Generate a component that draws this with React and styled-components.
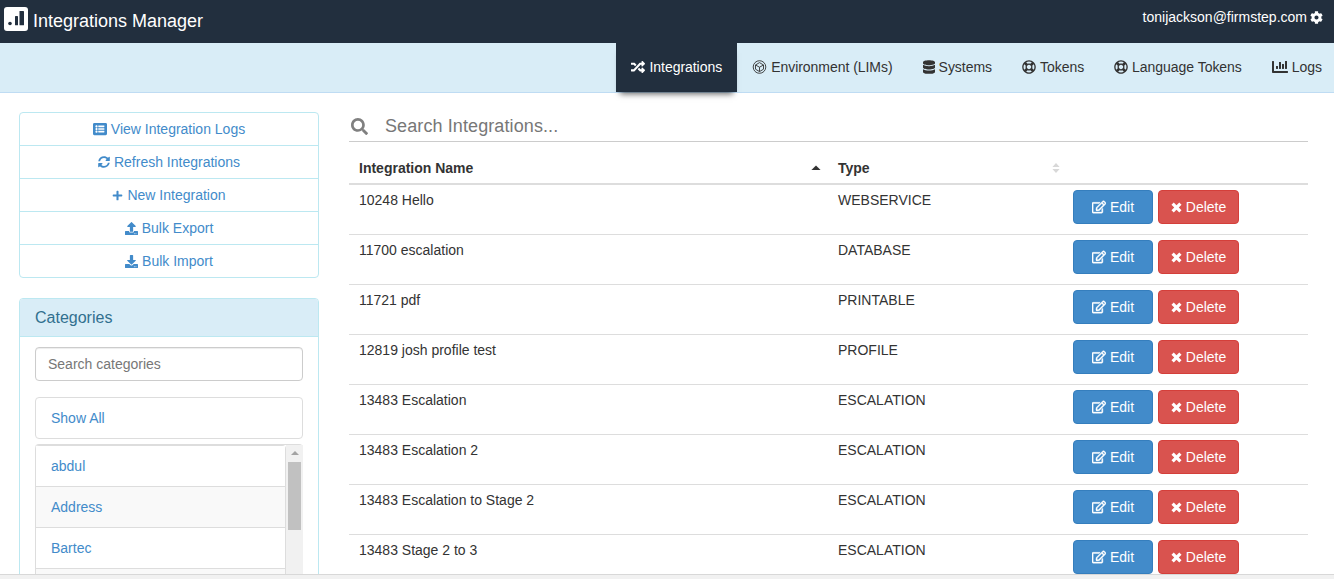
import React from "react";
import styled, { createGlobalStyle } from "styled-components";
import {
  FaCog,
  FaRandom,
  FaDatabase,
  FaRegLifeRing,
  FaChartBar,
  FaListAlt,
  FaSyncAlt,
  FaPlus,
  FaUpload,
  FaDownload,
  FaSearch,
  FaRegEdit,
} from "react-icons/fa";

const GlobalStyle = createGlobalStyle`
  html, body {
    margin: 0;
    height: 100%;
    overflow: hidden;
    background: #fff;
  }
  body {
    font-family: "Liberation Sans", Arial, sans-serif;
    font-size: 14px;
    line-height: 20px;
    color: #333;
  }
  * { box-sizing: border-box; }
`;

const TopBar = styled.header`
  height: 43px;
  background: #222f3e;
  color: #fff;
  display: flex;
  justify-content: space-between;
  padding: 0 11px 0 4px;
`;

const Brand = styled.div`
  display: flex;
  align-items: flex-start;
  gap: 5px;
  padding-top: 7px;
  font-size: 18px;
  line-height: 28px;
`;

const User = styled.div`
  display: flex;
  align-items: center;
  gap: 3px;
  height: 34px;
  svg { font-size: 13px; }
`;

const SubNav = styled.nav`
  height: 50px;
  background: #d9edf7;
  border-bottom: 1px solid #bfdcf3;
  display: flex;
  justify-content: flex-end;
  margin-right: -3px;
`;

const Tab = styled.a`
  display: flex;
  align-items: center;
  gap: 4px;
  height: 49px;
  padding: 0 15px 2px;
  letter-spacing: -0.04px;
  color: ${(p) => (p.$active ? "#fff" : "#333")};
  background: ${(p) => (p.$active ? "#222f3e" : "transparent")};
  box-shadow: ${(p) => (p.$active ? "0 6px 6px -4px rgba(0,0,0,.6)" : "none")};
`;

const DatabaseIcon = styled(FaDatabase)`
  width: 12px;
  height: 14px;
`;

const EditIcon = styled(FaRegEdit)`
  stroke: currentColor;
  stroke-width: 16px;
`;

const Page = styled.main`
  display: grid;
  grid-template-columns: 300px 959px;
  column-gap: 30px;
  padding: 18px 0 0 19px;
  align-items: start;
`;

const Sidebar = styled.aside`
  display: flex;
  flex-direction: column;
  gap: 20px;
  padding-top: 1px;
`;

const ActionList = styled.div`
  border: 1px solid #bce8f1;
  border-radius: 4px;
`;

const ActionLink = styled.a`
  display: flex;
  justify-content: center;
  align-items: center;
  gap: 4px;
  height: 33px;
  color: #428bca;
  &:first-child { height: 32px; }
  & + & { border-top: 1px solid #bce8f1; }
`;

const Panel = styled.section`
  border: 1px solid #bce8f1;
  border-radius: 4px;
`;

const PanelHeading = styled.h3`
  margin: 0;
  height: 38px;
  padding: 0 15px;
  background: #d9edf7;
  border-bottom: 1px solid #bce8f1;
  border-radius: 3px 3px 0 0;
  color: #31708f;
  font-size: 16px;
  font-weight: 400;
  line-height: 37px;
`;

const PanelBody = styled.div`
  padding: 10px 15px 15px;
`;

const CategorySearch = styled.input`
  display: block;
  width: 100%;
  height: 34px;
  padding: 6px 12px;
  border: 1px solid #ccc;
  border-radius: 4px;
  box-shadow: inset 0 1px 1px rgba(0, 0, 0, 0.075);
  font: inherit;
  color: #555;
  outline: none;
  &::placeholder { color: #777; opacity: 1; }
`;

const CategoryItem = styled.a`
  display: block;
  height: 41px;
  padding: 0 15px;
  line-height: 41px;
  color: #428bca;
  background: ${(p) => (p.$striped ? "#f9f9f9" : "#fff")};
  border-bottom: 1px solid #ddd;
`;

const ShowAll = styled(CategoryItem)`
  height: 42px;
  margin: 16px 0 5px;
  border: 1px solid #ddd;
  border-radius: 4px;
`;

const ScrollBox = styled.div`
  display: flex;
  height: 200px;
  border-top: 1px solid #ddd;
  border-radius: 4px 4px 0 0;
`;

const CategoryList = styled.div`
  flex: 1;
  border: 1px solid #ddd;
  border-bottom: 0;
  border-radius: 4px 4px 0 0;
`;

const ScrollTrack = styled.div`
  flex: 0 0 17px;
  background: #f1f1f1;
  display: flex;
  flex-direction: column;
  align-items: center;
  padding-top: 6px;
`;

const ScrollArrow = styled.div`
  width: 0;
  height: 0;
  border-left: 4px solid transparent;
  border-right: 4px solid transparent;
  border-bottom: 4px solid #a3a3a3;
`;

const ScrollThumb = styled.div`
  width: 13px;
  height: 68px;
  margin-top: 7px;
  background: #c1c1c1;
`;

const SearchRow = styled.div`
  display: flex;
  align-items: center;
  gap: 17px;
  height: 30px;
  padding-left: 2px;
  border-bottom: 1px solid #ccc;
  box-sizing: content-box;
  color: #777;
  font-size: 18px;
  letter-spacing: 0.1px;
  svg { font-size: 17px; color: #808080; }
`;

const Row = styled.div`
  display: grid;
  grid-template-columns: 479px 235px 1fr;
  height: 50px;
  border-bottom: 1px solid #ddd;
`;

const HeadRow = styled(Row)`
  height: 43px;
  border-bottom: 2px solid #ddd;
  font-weight: 700;
  padding-top: 10px;
`;

const HeadCell = styled.div`
  display: flex;
  justify-content: space-between;
  align-items: center;
  padding: 0 ${(p) => p.$right}px 0 10px;
  color: #333;
`;

const Cell = styled.div`
  padding: 5px 10px 0;
  color: #333;
`;

const Actions = styled.div`
  display: flex;
  gap: 5px;
  padding: 5px 0 0 10px;
`;

const Button = styled.button`
  display: flex;
  align-items: center;
  justify-content: center;
  gap: 4px;
  width: ${(p) => (p.$danger ? 81 : 80)}px;
  height: 34px;
  padding: 0;
  font: inherit;
  color: #fff;
  background: ${(p) => (p.$danger ? "#d9534f" : "#428bca")};
  border: 1px solid ${(p) => (p.$danger ? "#d43f3a" : "#357ebd")};
  border-radius: 4px;
`;

const BottomBar = styled.div`
  position: fixed;
  left: 0;
  right: 0;
  bottom: 0;
  height: 5px;
  background: #f1f1f1;
  border-top: 1px solid #d8d8d8;
`;

const Logo = () => (
  <svg width="24" height="24" viewBox="0 0 24 24">
    <rect width="24" height="24" rx="3" fill="#fff" />
    <circle cx="6" cy="16.5" r="1.8" fill="#222f3e" />
    <rect x="11" y="9" width="3" height="9.3" rx="0.6" fill="#222f3e" />
    <rect x="15.5" y="4" width="4.5" height="14.3" rx="0.6" fill="#222f3e" />
  </svg>
);

const EnvironmentIcon = () => (
  <svg width="15" height="14" viewBox="0 0 15 14" fill="none" stroke="currentColor" strokeWidth="0.9">
    <circle cx="7.5" cy="7" r="6.3" />
    <path d="M7.5 2.6 11.5 5v4.2l-4 2.4-4-2.4V5zM3.5 5l4 2.2L11.5 5M7.5 7.2v4.4" />
  </svg>
);

const DeleteIcon = () => (
  <svg width="11" height="11" viewBox="0 0 11 11" fill="none" stroke="currentColor" strokeWidth="3.2">
    <path d="M1.6 1.6 9.4 9.4M9.4 1.6 1.6 9.4" />
  </svg>
);

const SortedCaret = () => (
  <svg width="10" height="10" viewBox="0 0 10 10" fill="#333">
    <path d="M5 2.5 9.6 7H.4z" />
  </svg>
);

const UnsortedCaret = () => (
  <svg width="8" height="12" viewBox="0 0 8 12" fill="#d8d8d8">
    <path d="M4 1 7.6 5H.4zM4 11 .4 7h7.2z" />
  </svg>
);

const tabs = [
  { label: "Integrations", icon: <FaRandom size={14} />, active: true },
  { label: "Environment (LIMs)", icon: <EnvironmentIcon /> },
  { label: "Systems", icon: <DatabaseIcon /> },
  { label: "Tokens", icon: <FaRegLifeRing size={14} /> },
  { label: "Language Tokens", icon: <FaRegLifeRing size={14} /> },
  { label: "Logs", icon: <FaChartBar size={16} /> },
];

const actions = [
  { label: "View Integration Logs", icon: <FaListAlt size={14} /> },
  { label: "Refresh Integrations", icon: <FaSyncAlt size={12} /> },
  { label: "New Integration", icon: <FaPlus size={11} /> },
  { label: "Bulk Export", icon: <FaUpload size={13} /> },
  { label: "Bulk Import", icon: <FaDownload size={13} /> },
];

const integrations = [
  ["10248 Hello", "WEBSERVICE"],
  ["11700 escalation", "DATABASE"],
  ["11721 pdf", "PRINTABLE"],
  ["12819 josh profile test", "PROFILE"],
  ["13483 Escalation", "ESCALATION"],
  ["13483 Escalation 2", "ESCALATION"],
  ["13483 Escalation to Stage 2", "ESCALATION"],
  ["13483 Stage 2 to 3", "ESCALATION"],
];

const App = () => (
  <>
    <GlobalStyle />
    <TopBar>
      <Brand>
        <Logo />
        Integrations Manager
      </Brand>
      <User>
        tonijackson@firmstep.com <FaCog />
      </User>
    </TopBar>
    <SubNav>
      {tabs.map((tab) => (
        <Tab key={tab.label} $active={tab.active}>
          {tab.icon}
          {tab.label}
        </Tab>
      ))}
    </SubNav>
    <Page>
      <Sidebar>
        <ActionList>
          {actions.map((action) => (
            <ActionLink key={action.label}>
              {action.icon}
              {action.label}
            </ActionLink>
          ))}
        </ActionList>
        <Panel>
          <PanelHeading>Categories</PanelHeading>
          <PanelBody>
            <CategorySearch placeholder="Search categories" />
            <ShowAll>Show All</ShowAll>
            <ScrollBox>
              <CategoryList>
                <CategoryItem>abdul</CategoryItem>
                <CategoryItem $striped>Address</CategoryItem>
                <CategoryItem>Bartec</CategoryItem>
                <CategoryItem $striped />
              </CategoryList>
              <ScrollTrack>
                <ScrollArrow />
                <ScrollThumb />
              </ScrollTrack>
            </ScrollBox>
          </PanelBody>
        </Panel>
      </Sidebar>
      <section>
        <SearchRow>
          <FaSearch />
          Search Integrations...
        </SearchRow>
        <HeadRow>
          <HeadCell $right={7}>
            Integration Name
            <SortedCaret />
          </HeadCell>
          <HeadCell $right={3}>
            Type
            <UnsortedCaret />
          </HeadCell>
          <div />
        </HeadRow>
        {integrations.map(([name, type]) => (
          <Row key={name}>
            <Cell>{name}</Cell>
            <Cell>{type}</Cell>
            <Actions>
              <Button>
                <EditIcon size={14} />
                Edit
              </Button>
              <Button $danger>
                <DeleteIcon />
                Delete
              </Button>
            </Actions>
          </Row>
        ))}
      </section>
    </Page>
    <BottomBar />
  </>
);

export default App;
